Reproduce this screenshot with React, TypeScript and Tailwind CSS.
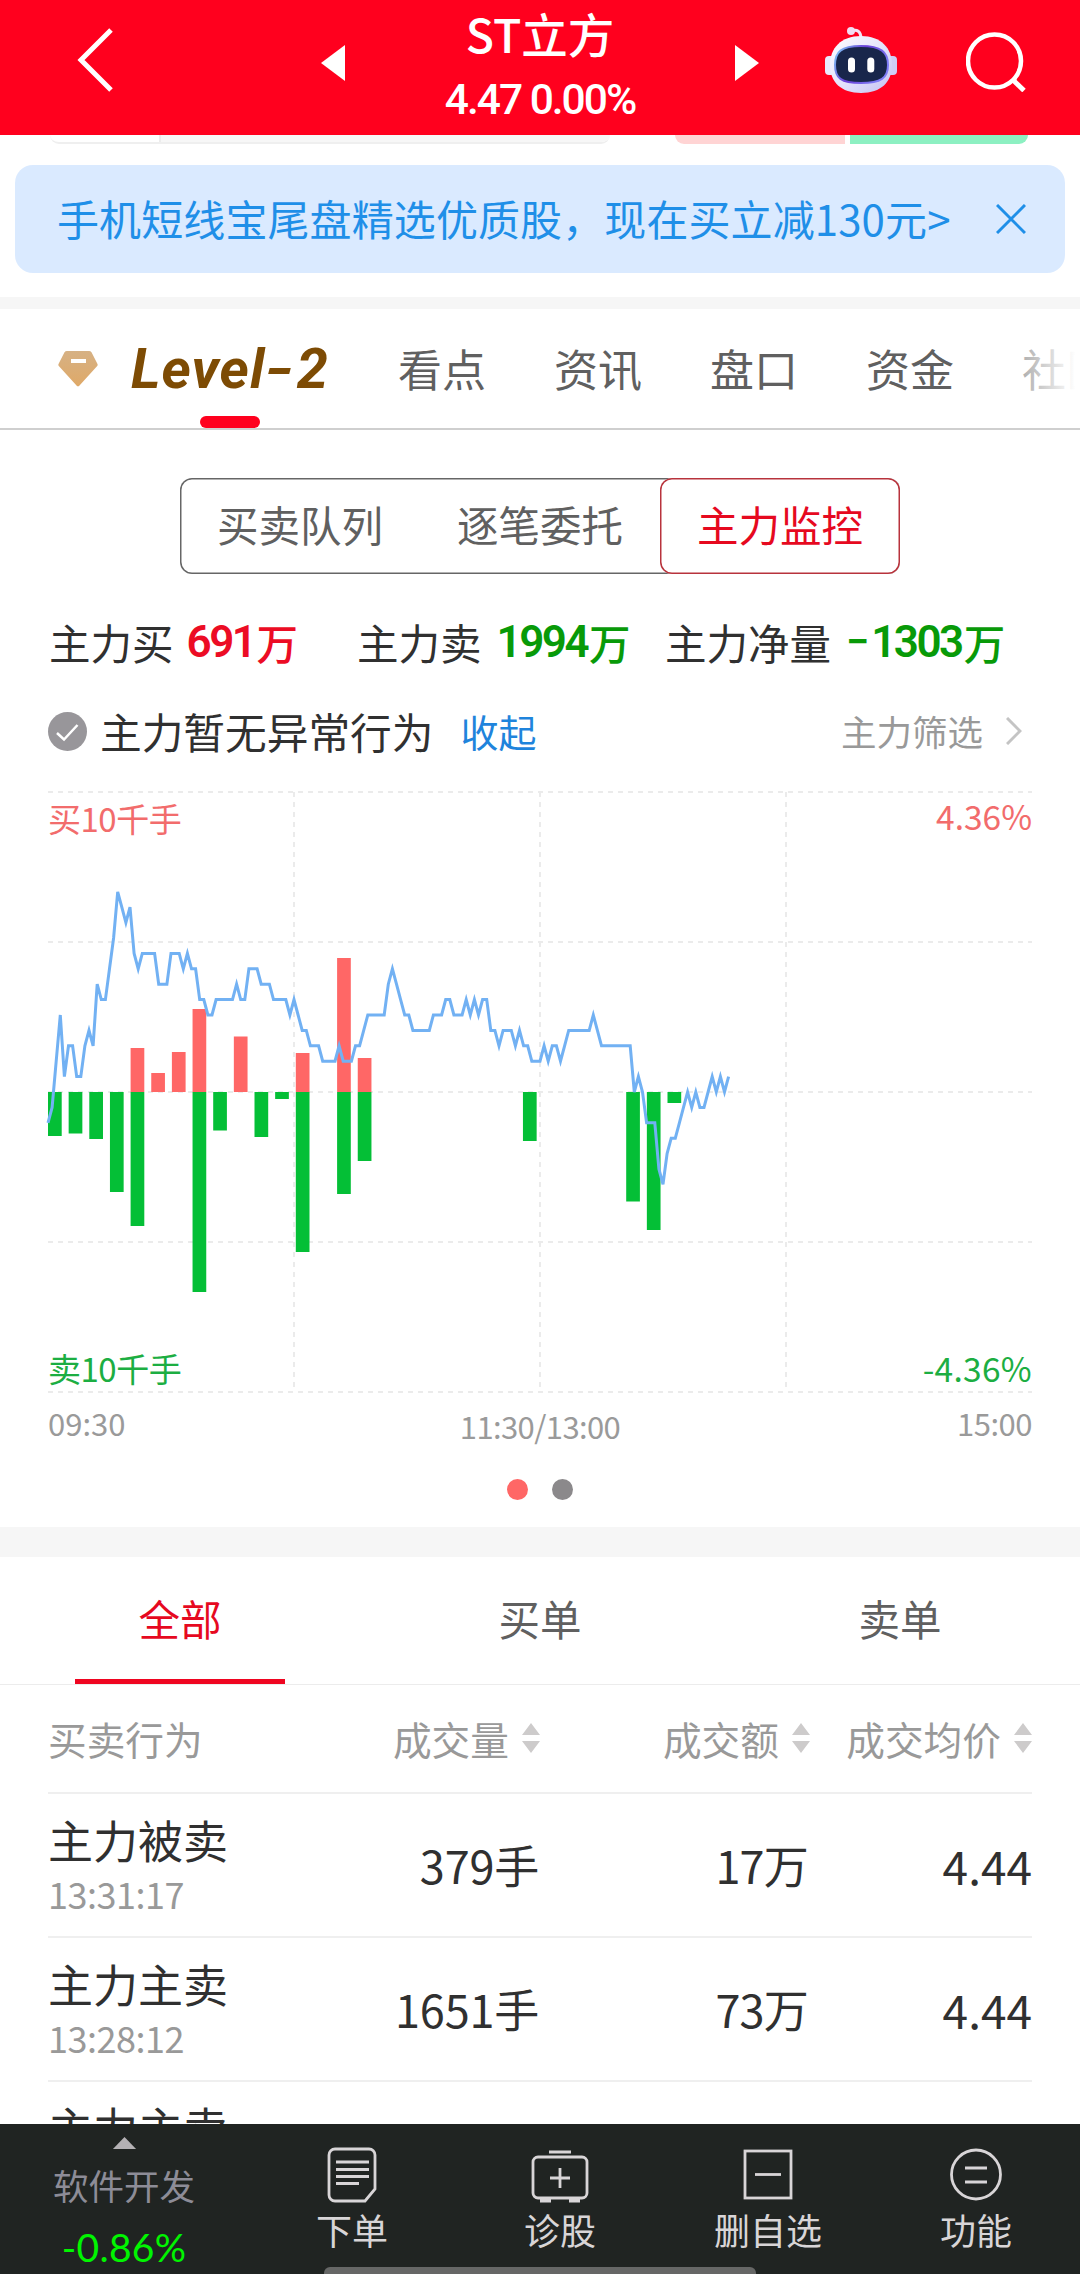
import React from 'react';

// price line, one entry per traded minute, in ticks from the previous close
const PRICE_TICKS = [
  -2, -1, 2, 5, 1, 3, 3, 1, 1, 3, 4, 3, 7, 6, 6, 8, 10, 13, 12, 11,
  12, 9, 8, 9, 9, 9, 9, 7, 7, 7, 9, 9, 9, 8, 9, 8, 8, 6, 6, 5,
  5, 6, 6, 6, 6, 6, 7, 6, 6, 8, 8, 8, 7, 7, 7, 6, 6, 6, 6, 5,
  6, 5, 4, 4, 3, 3, 3, 2, 2, 2, 2, 3, 2, 2, 2, 3, 3, 4, 5, 5,
  5, 5, 5, 7, 8, 7, 6, 5, 5, 4, 4, 4, 4, 4, 5, 5, 5, 6, 6, 5,
  5, 5, 6, 5, 6, 5, 6, 6, 4, 4, 3, 4, 4, 4, 3, 4, 3, 3, 2, 2,
  2, 3, 2, 3, 3, 2, 3, 4, 4, 4, 4, 4, 4, 5, 4, 3, 3, 3, 3, 3,
  3, 3, 3, 0, 1, 0, -2, -2, -2, -5, -6, -4, -3, -3, -2, -1, 0, -1, 0, -1,
  -1, 0, 1, 0, 1, 0, 1,
];

// slot index -> bar height in px
const BUY_BARS: [number, number][] = [
  [4, 44], [5, 19], [6, 40], [7, 83], [9, 55.5], [12, 39], [14, 134], [15, 34],
];
const SELL_BARS: [number, number][] = [
  [0, 44], [1, 41.5], [2, 47], [3, 100], [4, 134], [7, 200], [8, 38.5], [10, 45], [11, 7],
  [12, 160], [14, 102], [15, 69], [23, 49], [28, 109.5], [29, 138], [30, 11],
];

const TABS = ['看点', '资讯', '盘口', '资金', '社区'];

const ORDERS = [
  { action: '主力被卖', time: '13:31:17', volume: '379', amount: '17', price: '4.44' },
  { action: '主力主卖', time: '13:28:12', volume: '1651', amount: '73', price: '4.44' },
];

const Header: React.FC = () => (
  <header className="flex h-[135px] shrink-0 items-start bg-[#ff001e] pl-[77px] text-white">
    <svg className="mt-[28px] h-[64px] w-[36px]" viewBox="0 0 36 64" fill="none" stroke="currentColor" strokeWidth={5}>
      <path d="M34 2L4 32l30 30" />
    </svg>
    <svg className="mt-[45px] ml-[208px] h-[36px] w-[24px]" viewBox="0 0 24 36" fill="currentColor">
      <path d="M24 0v36L0 18z" />
    </svg>
    <div className="flex w-[390px] flex-col items-center font-medium">
      <div className="h-[66px] text-[46.500px] leading-[66px]">ST立方</div>
      <div className="font-['Roboto'] text-[42.500px] leading-[68px] tracking-[-2px]">4.47 0.00%</div>
    </div>
    <svg className="mt-[45px] h-[36px] w-[24px]" viewBox="0 0 24 36" fill="currentColor">
      <path d="M0 0v36l24-18z" />
    </svg>
    <svg className="mt-[26px] ml-[66px] h-[68px] w-[72px]" viewBox="0 0 72 68" fill="none">
      <defs>
        <linearGradient id="head" x1="0" y1="0" x2="1" y2="1">
          <stop offset="0" stopColor="#ffffff" />
          <stop offset="0.55" stopColor="#e2e0fb" />
          <stop offset="1" stopColor="#c3c1f2" />
        </linearGradient>
        <linearGradient id="rim" x1="0" y1="0" x2="1" y2="0.4">
          <stop offset="0" stopColor="#7fd0f5" />
          <stop offset="0.5" stopColor="#6a3fd8" />
          <stop offset="1" stopColor="#7d7bf5" />
        </linearGradient>
      </defs>
      <path d="M26 5c6-2 10 0 10 8" stroke="#f3e3f6" strokeWidth={3} />
      <circle cx="26" cy="5" r="4" fill="#f1dcf2" />
      <rect x="0" y="30" width="10" height="19" rx="4" fill="#e9e9fd" />
      <rect x="62" y="30" width="10" height="19" rx="4" fill="#cfcdf6" />
      <path d="M36 10c20 0 31 12 31 29S56 67 36 67 5 56 5 39s11-29 31-29z" fill="url(#head)" />
      <path d="M36 20c20 0 27 6 27 19s-7 18-27 18S10 52 10 39s6-19 26-19z" fill="#18264b" stroke="url(#rim)" strokeWidth={2} />
      <rect x="23" y="31.5" width="7" height="15" rx="3.5" fill="#fff" />
      <rect x="42.3" y="31.5" width="7" height="15" rx="3.5" fill="#fff" />
    </svg>
    <svg className="mt-[32px] ml-[69px] h-[60px] w-[60px]" viewBox="0 0 60 60" fill="none" stroke="currentColor" strokeWidth={4.5}>
      <circle cx="28.5" cy="29" r="26.5" />
      <path d="M47 48l11 10.5" strokeWidth={5} />
    </svg>
  </header>
);

const Banner: React.FC = () => (
  <div className="mx-[15px] mt-[21px] flex h-[108px] items-center justify-between rounded-[18px] bg-[#daeaff] pr-[39px] pl-[42px] text-[#1f8fe8]">
    <span className="-mt-[3px] text-[42px] leading-[60px] tracking-[0.100px]">手机短线宝尾盘精选优质股，现在买立减130元&gt;</span>
    <svg className="h-[30px] w-[30px]" viewBox="0 0 30 30" fill="none" stroke="currentColor" strokeWidth={3}>
      <path d="M1 1l28 28M29 1L1 29" />
    </svg>
  </div>
);

const TabBar: React.FC = () => (
  <nav className="relative flex h-[121px] items-start overflow-hidden border-b-2 border-[#cfcfcf] pl-[58px]">
    <svg className="mt-[42px] h-[36px] w-[40px] shrink-0" viewBox="0 0 40 36">
      <defs>
        <linearGradient id="gem" x1="0" y1="0" x2="0" y2="1">
          <stop offset="0" stopColor="#d6b184" />
          <stop offset="1" stopColor="#dfa968" />
        </linearGradient>
      </defs>
      <path d="M9 0h22a3 3 0 012.5 1.3L39.5 13a2 2 0 01-.3 2L21.5 34.5a2 2 0 01-3 0L.8 15a2 2 0 01-.3-2L6.5 1.3A3 3 0 019 0z" fill="url(#gem)" />
      <rect x="13" y="8" width="15" height="4" fill="#fff" />
    </svg>
    <div className="ml-[32px] flex h-full w-[200px] shrink-0 flex-col items-center justify-between">
      <span className="mt-[26px] font-['Roboto'] text-[56px] leading-[68px] font-bold tracking-[1px] whitespace-nowrap text-[#7d4b04] italic">
        Leve<span className="tracking-[2px]">l</span>
        <span className="mr-[2px] inline-block origin-center scale-x-140 px-[3px]">-</span>2
      </span>
      <span className="h-[12px] w-[60px] rounded-full bg-[#ff001e]" />
    </div>
    <div className="mt-[27px] ml-[68px] flex shrink-0 gap-[68px] text-[44px] leading-[64px] text-[#606060]">
      {TABS.map(tab => (
        <span key={tab} className="w-[88px] whitespace-nowrap">{tab}</span>
      ))}
    </div>
    <div className="absolute top-0 right-0 h-[118px] w-[90px] bg-linear-to-r from-white/20 to-white to-95%" />
  </nav>
);

const Segments: React.FC = () => (
  <div className="mx-[180px] mt-[48px] flex h-[96px] rounded-[12px] text-[41.500px] leading-[92px] text-[#606060] shadow-[inset_0_0_0_1.500px_#666]">
    <button className="h-[96px] w-[240px] pb-[4px]">买卖队列</button>
    <button className="h-[96px] w-[240px] pb-[4px]">逐笔委托</button>
    <button className="h-[96px] w-[240px] rounded-[12px] bg-white pb-[4px] text-[#e6091f] shadow-[inset_0_0_0_1.500px_#b8333c]">主力监控</button>
  </div>
);

const Amount: React.FC<{ value: string; color: string }> = ({ value, color }) => (
  <span className={`flex font-medium ${color}`}>
    <span className="font-['Roboto'] text-[44px] font-semibold tracking-[-2.500px]">{value}</span>
    <span className="ml-[2px]">万</span>
  </span>
);

const Stats: React.FC = () => (
  <div className="mt-[36px] flex h-[65px] pl-[49px] text-[41.500px] leading-[64px] whitespace-nowrap text-[#303030]">
    <div className="flex w-[308px] gap-[13px]">
      主力买
      <Amount value="691" color="text-[#ec0c24]" />
    </div>
    <div className="flex w-[308px] gap-[15px]">
      主力卖
      <Amount value="1994" color="text-[#089a08]" />
    </div>
    <div className="flex">
      主力净量
      <span className="mr-[2px] ml-[15px] font-['Roboto'] font-semibold text-[#089a08]">−</span>
      <Amount value="1303" color="text-[#089a08]" />
    </div>
  </div>
);

const Status: React.FC = () => (
  <div className="mt-[24px] flex h-[64px] items-center pr-[58px] pl-[48px]">
    <svg className="h-[39px] w-[39px]" viewBox="0 0 39 39" fill="none">
      <circle cx="19.5" cy="19.5" r="19.5" fill="#98969a" />
      <path d="M9 21l7 6.5L29.5 13" stroke="#fff" strokeWidth={2.5} />
    </svg>
    <span className="ml-[13px] text-[41.700px] leading-[60px] text-[#303030]">主力暂无异常行为</span>
    <span className="ml-[27px] text-[38px] leading-[60px] text-[#1f84dc]">收起</span>
    <span className="ml-auto text-[35.500px] leading-[60px] text-[#999]">主力筛选</span>
    <svg className="ml-[23px] h-[28px] w-[16px]" viewBox="0 0 16 28" fill="none" stroke="#c4c4c4" strokeWidth={3}>
      <path d="M1 1l13 13L1 27" />
    </svg>
  </div>
);

const MoneyChart: React.FC = () => {
  const line = PRICE_TICKS.map((t, i) => `${(i * 4.1).toFixed(1)},${(300 - t * 15.4).toFixed(1)}`).join(' ');
  return (
    <div className="mx-[48px] mt-[29px]">
      <div className="relative h-[600px]">
        <svg className="h-[600px] w-[984px] overflow-visible" viewBox="0 0 984 600" fill="none">
          <g stroke="#ebebeb" strokeWidth={2} strokeDasharray="5 5">
            {[0, 150, 300, 450, 600].map(y => <path key={y} d={`M0 ${y}H984`} />)}
            {[246, 492, 738].map(x => <path key={x} d={`M${x} 0V600`} />)}
          </g>
          {BUY_BARS.map(([i, h]) => (
            <rect key={i} x={i * 20.65} y={300 - h} width="13.7" height={h} fill="#ff6766" />
          ))}
          {SELL_BARS.map(([i, h]) => (
            <rect key={i} x={i * 20.65} y="300" width="13.7" height={h} fill="#04bf36" />
          ))}
          <polyline points={line} stroke="#72b1f3" strokeWidth={3} />
        </svg>
        <div className="absolute inset-0 flex flex-col justify-between text-[33px] leading-[48px]">
          <div className="flex justify-between text-[#f26c6c]">
            <span className="pt-[2px] tracking-[-0.500px]">买10千手</span>
            <span className="text-[33.500px]">4.36%</span>
          </div>
          <div className="flex justify-between text-[#1cae42]">
            <span className="pt-[1px] tracking-[-0.500px]">卖10千手</span>
            <span className="pt-[1px] text-[33.500px] tracking-[0.300px]">-4.36%</span>
          </div>
        </div>
      </div>
      <div className="flex h-[62px] justify-between text-[31px] leading-[62px] text-[#9a9a9a]">
        <span className="w-[120px]">09:30</span>
        <span className="pt-[3px] tracking-[-0.600px]">11:30/13:00</span>
        <span className="w-[120px] text-right tracking-[-0.500px]">15:00</span>
      </div>
      <div className="mt-[25px] flex justify-center gap-[24px]">
        <span className="h-[21px] w-[21px] rounded-full bg-[#ff6766]" />
        <span className="h-[21px] w-[21px] rounded-full bg-[#8b898b]" />
      </div>
    </div>
  );
};

const SortIcon: React.FC = () => (
  <svg className="ml-[13px] h-[30px] w-[18px]" viewBox="0 0 18 30" fill="#cdcbcb">
    <path d="M9 0l9 12H0zM9 30l9-12H0z" />
  </svg>
);

const OrderTable: React.FC = () => (
  <section>
    <div className="flex h-[128px] border-b border-[#ececec] text-[41.500px] leading-[122px] text-[#606060]">
      <div className="flex flex-1 flex-col items-center justify-between text-[#e6091f]">
        全部
        <span className="h-[6px] w-[210px] bg-[#ef0520]" />
      </div>
      <div className="flex-1 text-center">买单</div>
      <div className="flex-1 text-center">卖单</div>
    </div>
    <div className="mx-[48px]">
      <div className="flex h-[109px] items-center border-b-2 border-[#efefef] text-[38.700px] text-[#999]">
        <span className="w-[200px]">买卖行为</span>
        <span className="flex w-[292px] items-center justify-end">成交量<SortIcon /></span>
        <span className="flex w-[270px] items-center justify-end">成交额<SortIcon /></span>
        <span className="flex w-[222px] items-center justify-end">成交均价<SortIcon /></span>
      </div>
      {ORDERS.map(order => (
        <div key={order.time} className="flex h-[144px] items-center border-b-2 border-[#efefef] text-[45px] text-[#303030]">
          <div className="w-[250px]">
            <div className="leading-[56px]">{order.action}</div>
            <div className="h-[50px] text-[36px] leading-[50px] tracking-[-0.500px] text-[#999]">{order.time}</div>
          </div>
          <span className="w-[241px] text-right tracking-[-0.200px]">{order.volume}手</span>
          <span className="w-[269px] text-right tracking-[-0.800px]">{order.amount}万</span>
          <span className="w-[224px] text-right text-[46px]">{order.price}</span>
        </div>
      ))}
      <div className="mt-[17px] text-[45px] leading-[56px] text-[#303030]">主力主卖</div>
    </div>
  </section>
);

const NavItem: React.FC<{ label: string; children: React.ReactNode }> = ({ label, children }) => (
  <div className="flex w-[208px] flex-col items-center pt-[20px]">
    <svg className="h-[60px] w-[60px]" viewBox="0 0 60 60" fill="none" stroke="#d8d5d7" strokeWidth={2.8}>
      {children}
    </svg>
    <span className="text-[36px] leading-[50px] text-[#d8d5d7]">{label}</span>
  </div>
);

const BottomBar: React.FC = () => (
  <footer className="relative flex h-[150px] shrink-0 bg-[#202422]">
    <div className="flex w-[248px] flex-col items-center pt-[13px]">
      <svg className="h-[14px] w-[27px]" viewBox="0 0 27 14" fill="#b4b1b4"><path d="M13.5 0L27 14H0z" /></svg>
      <span className="mt-[10px] text-[35.500px] leading-[52px] text-[#8d8c97]">软件开发</span>
      <span className="mt-[9px] font-['Lato'] text-[39px] leading-[54px] tracking-[0.300px] text-[#00f500]">-0.86%</span>
    </div>
    <NavItem label="下单">
      <path d="M13 5h34a6 6 0 016 6v34L43 57H13a6 6 0 01-6-6V11a6 6 0 016-6z" />
      <path d="M14 18h33M14 25.5h33M14 32.5h33M14 39.5h23" />
    </NavItem>
    <NavItem label="诊股">
      <rect x="3" y="13" width="54" height="41" rx="5" />
      <path d="M19 8h22M30 24v20M20 34h20" />
      <path d="M10 56.5h11M39 56.5h11" strokeWidth={4} />
    </NavItem>
    <NavItem label="删自选">
      <rect x="7" y="7" width="46" height="47" />
      <path d="M17 30.5h26" />
    </NavItem>
    <NavItem label="功能">
      <circle cx="30" cy="30.5" r="24.5" />
      <path d="M19 24h22M19 38h22" />
    </NavItem>
    <div className="absolute bottom-0 left-[324px] h-[7px] w-[432px] rounded-t-[6px] bg-[#666766]" />
  </footer>
);

export default function App() {
  return (
    <div className="flex h-[2274px] w-[1080px] flex-col overflow-hidden bg-white font-['Noto_Sans_CJK_SC',sans-serif]">
      <Header />
      <main className="min-h-0 flex-1 overflow-hidden">
        {/* lower edge of the order pill scrolled under the header */}
        <div className="flex h-[9px] justify-between pr-[52px] pl-[50px]">
          <div className="flex w-[560px] overflow-hidden rounded-b-[24px] border-b-2 border-[#efefef]">
            <div className="w-[111px] border-r-2 border-[#ececec]" />
            <div className="flex-1 bg-[#f7f7f7]" />
          </div>
          <div className="flex w-[353px] gap-[5px] overflow-hidden rounded-b-[24px]">
            <div className="w-[170px] bg-[#ffd4d4]" />
            <div className="flex-1 bg-[#8df0c2]" />
          </div>
        </div>
        <Banner />
        <div className="mt-[24px] h-[12px] bg-[#f6f6f6]" />
        <TabBar />
        <Segments />
        <Stats />
        <Status />
        <MoneyChart />
        <div className="mt-[27px] h-[30px] bg-[#f6f6f6]" />
        <OrderTable />
      </main>
      <BottomBar />
    </div>
  );
}
